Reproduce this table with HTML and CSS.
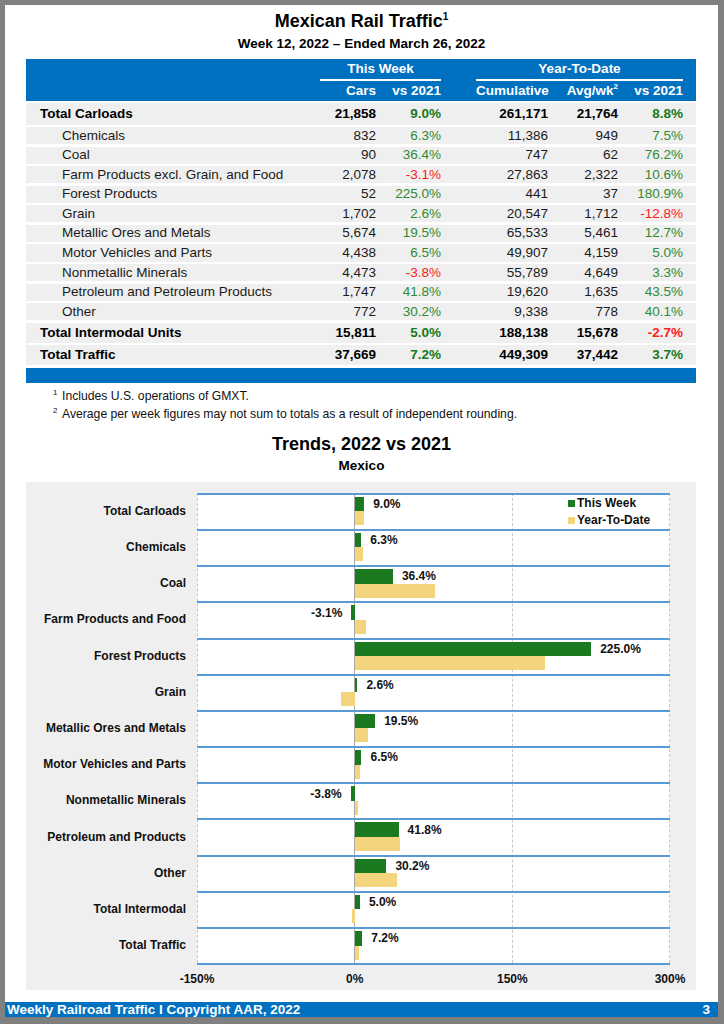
FILE: index.html
```html
<!DOCTYPE html>
<html lang="en">
<head>
<meta charset="utf-8">
<title>Mexican Rail Traffic</title>
<link rel="stylesheet" href="styles.css">
</head>
<body>
<div class="page">
  <div class="title">Mexican Rail Traffic<sup>1</sup></div>
  <div class="subtitle">Week 12, 2022 – Ended March 26, 2022</div>

  <div class="tbl">
    <div class="thead">
      <div class="cols hrow1">
        <div class="grp g1">This Week</div>
        <div class="grp g2">Year-To-Date</div>
      </div>
      <div class="cols hrow2">
        <span></span><span>Cars</span><span>vs 2021</span><span></span><span>Cumulative</span><span>Avg/wk<sup>2</sup></span><span>vs 2021</span><span></span>
      </div>
    </div>
    <div class="cols row total first"><span class="lbl">Total Carloads</span><span>21,858</span><span class="up">9.0%</span><span></span><span>261,171</span><span>21,764</span><span class="up">8.8%</span><span></span></div>
    <div class="cols row"><span class="lbl">Chemicals</span><span>832</span><span class="up">6.3%</span><span></span><span>11,386</span><span>949</span><span class="up">7.5%</span><span></span></div>
    <div class="cols row"><span class="lbl">Coal</span><span>90</span><span class="up">36.4%</span><span></span><span>747</span><span>62</span><span class="up">76.2%</span><span></span></div>
    <div class="cols row"><span class="lbl">Farm Products excl. Grain, and Food</span><span>2,078</span><span class="dn">-3.1%</span><span></span><span>27,863</span><span>2,322</span><span class="up">10.6%</span><span></span></div>
    <div class="cols row"><span class="lbl">Forest Products</span><span>52</span><span class="up">225.0%</span><span></span><span>441</span><span>37</span><span class="up">180.9%</span><span></span></div>
    <div class="cols row"><span class="lbl">Grain</span><span>1,702</span><span class="up">2.6%</span><span></span><span>20,547</span><span>1,712</span><span class="dn">-12.8%</span><span></span></div>
    <div class="cols row"><span class="lbl">Metallic Ores and Metals</span><span>5,674</span><span class="up">19.5%</span><span></span><span>65,533</span><span>5,461</span><span class="up">12.7%</span><span></span></div>
    <div class="cols row"><span class="lbl">Motor Vehicles and Parts</span><span>4,438</span><span class="up">6.5%</span><span></span><span>49,907</span><span>4,159</span><span class="up">5.0%</span><span></span></div>
    <div class="cols row"><span class="lbl">Nonmetallic Minerals</span><span>4,473</span><span class="dn">-3.8%</span><span></span><span>55,789</span><span>4,649</span><span class="up">3.3%</span><span></span></div>
    <div class="cols row"><span class="lbl">Petroleum and Petroleum Products</span><span>1,747</span><span class="up">41.8%</span><span></span><span>19,620</span><span>1,635</span><span class="up">43.5%</span><span></span></div>
    <div class="cols row"><span class="lbl">Other</span><span>772</span><span class="up">30.2%</span><span></span><span>9,338</span><span>778</span><span class="up">40.1%</span><span></span></div>
    <div class="cols row total"><span class="lbl">Total Intermodal Units</span><span>15,811</span><span class="up">5.0%</span><span></span><span>188,138</span><span>15,678</span><span class="dn">-2.7%</span><span></span></div>
    <div class="cols row total"><span class="lbl">Total Traffic</span><span>37,669</span><span class="up">7.2%</span><span></span><span>449,309</span><span>37,442</span><span class="up">3.7%</span><span></span></div>
    <div class="tfoot"></div>
  </div>

  <div class="notes">
    <div class="note"><sup>1</sup>Includes U.S. operations of GMXT.</div>
    <div class="note"><sup>2</sup>Average per week figures may not sum to totals as a result of independent rounding.</div>
  </div>

  <div class="ctitle">Trends, 2022 vs 2021</div>
  <div class="csub">Mexico</div>

  <div class="chart">
    <div class="cbody">
      <div class="cats">
        <div>Total Carloads</div>
        <div>Chemicals</div>
        <div>Coal</div>
        <div>Farm Products and Food</div>
        <div>Forest Products</div>
        <div>Grain</div>
        <div>Metallic Ores and Metals</div>
        <div>Motor Vehicles and Parts</div>
        <div>Nonmetallic Minerals</div>
        <div>Petroleum and Products</div>
        <div>Other</div>
        <div>Total Intermodal</div>
        <div>Total Traffic</div>
      </div>
      <div class="plot">
        <div class="vl vl-left"></div>
        <div class="vl vl-mid"></div>
        <div class="vl vl-right"></div>
        <div class="zero"></div>
        <div class="legend">
          <div class="litem"><i class="sw sw-wk"></i>This Week</div>
          <div class="litem"><i class="sw sw-ytd"></i>Year-To-Date</div>
        </div>
        <div class="prow"><div class="bar wk" style="left:157.67px;width:9.46px"></div><div class="bar ytd" style="left:157.67px;width:9.25px"></div><span class="val" style="left:176.13px">9.0%</span></div>
        <div class="prow"><div class="bar wk" style="left:157.67px;width:6.62px"></div><div class="bar ytd" style="left:157.67px;width:7.88px"></div><span class="val" style="left:173.29px">6.3%</span></div>
        <div class="prow"><div class="bar wk" style="left:157.67px;width:38.26px"></div><div class="bar ytd" style="left:157.67px;width:80.09px"></div><span class="val" style="left:204.93px">36.4%</span></div>
        <div class="prow"><div class="bar wk" style="left:154.41px;width:3.26px"></div><div class="bar ytd" style="left:157.67px;width:11.14px"></div><span class="val" style="right:327.59px">-3.1%</span></div>
        <div class="prow"><div class="bar wk" style="left:157.67px;width:236.5px"></div><div class="bar ytd" style="left:157.67px;width:190.15px"></div><span class="val" style="left:403.17px">225.0%</span></div>
        <div class="prow"><div class="bar wk" style="left:157.67px;width:2.73px"></div><div class="bar ytd" style="left:144.22px;width:13.45px"></div><span class="val" style="left:169.4px">2.6%</span></div>
        <div class="prow"><div class="bar wk" style="left:157.67px;width:20.5px"></div><div class="bar ytd" style="left:157.67px;width:13.35px"></div><span class="val" style="left:187.17px">19.5%</span></div>
        <div class="prow"><div class="bar wk" style="left:157.67px;width:6.83px"></div><div class="bar ytd" style="left:157.67px;width:5.26px"></div><span class="val" style="left:173.5px">6.5%</span></div>
        <div class="prow"><div class="bar wk" style="left:153.68px;width:3.99px"></div><div class="bar ytd" style="left:157.67px;width:3.47px"></div><span class="val" style="right:328.32px">-3.8%</span></div>
        <div class="prow"><div class="bar wk" style="left:157.67px;width:43.94px"></div><div class="bar ytd" style="left:157.67px;width:45.72px"></div><span class="val" style="left:210.61px">41.8%</span></div>
        <div class="prow"><div class="bar wk" style="left:157.67px;width:31.74px"></div><div class="bar ytd" style="left:157.67px;width:42.15px"></div><span class="val" style="left:198.41px">30.2%</span></div>
        <div class="prow"><div class="bar wk" style="left:157.67px;width:5.26px"></div><div class="bar ytd" style="left:154.83px;width:2.84px"></div><span class="val" style="left:171.93px">5.0%</span></div>
        <div class="prow"><div class="bar wk" style="left:157.67px;width:7.57px"></div><div class="bar ytd" style="left:157.67px;width:3.89px"></div><span class="val" style="left:174.24px">7.2%</span></div>
      </div>
    </div>
    <div class="axis">
      <span>-150%</span><span>0%</span><span>150%</span><span>300%</span>
    </div>
  </div>

  <div class="footer">
    <span>Weekly Railroad Traffic I Copyright AAR, 2022</span>
    <span>3</span>
  </div>
</div>
</body>
</html>
```

FILE: styles.css
```css
body {
  margin: 0;
  background: #808080;
  font-family: "Liberation Sans", Arial, Helvetica, sans-serif;
  color: #111;
}

.page {
  margin: 5px 0 0 5px;
  width: 713px;
  height: 1012px;
  box-sizing: border-box;
  padding-top: 5px;
  background: #fff;
  display: flex;
  flex-direction: column;
}

.title {
  text-align: center;
  font-size: 18px;
  line-height: 22px;
  font-weight: bold;
  color: #000;
}

.title sup {
  font-size: 10px;
  line-height: 0;
  vertical-align: 7px;
}

.subtitle {
  margin-top: 4px;
  text-align: center;
  font-size: 13.5px;
  line-height: 16px;
  font-weight: bold;
  color: #000;
}

/* ---------- table ---------- */
.tbl {
  margin: 7px 0 0 21px;
  width: 670px;
}

.cols {
  display: grid;
  grid-template-columns: 294px 56px 65px 35px 72px 70px 65px 13px;
}

.thead {
  background: #0070c0;
  color: #fff;
  font-weight: bold;
  font-size: 13.5px;
}

.hrow1 {
  height: 22px;
}

.grp {
  grid-row: 1;
  border-bottom: 2px solid #fff;
  text-align: center;
  line-height: 20px;
}

.g1 { grid-column: 2 / 4; }
.g2 { grid-column: 5 / 8; }

.hrow2 {
  height: 20px;
  line-height: 20px;
}

.hrow2 span {
  text-align: right;
}

.hrow2 sup {
  font-size: 8px;
  line-height: 0;
  vertical-align: 6px;
}

.row {
  margin-top: 2.4px;
  height: 17.2px;
  background: #efefef;
  align-items: center;
  font-size: 13.5px;
  line-height: 16px;
  color: #1a1a1a;
}

.row span {
  text-align: right;
}

.row .lbl {
  text-align: left;
  padding-left: 36px;
}

.row.total {
  height: 20px;
  font-weight: bold;
  color: #000;
}

.row.total .lbl {
  padding-left: 14px;
}

.row.first {
  margin-top: 2px;
  height: 21.6px;
}

.up { color: #2f8a30; }
.row.total .up { color: #17791a; }
.dn { color: #ff1a1a; }

.tfoot {
  margin-top: 2.6px;
  height: 15px;
  background: #0070c0;
}

/* ---------- notes ---------- */
.notes {
  margin: 4px 0 0 48px;
  font-size: 12.2px;
  line-height: 18px;
  color: #111;
}

.note sup {
  display: inline-block;
  width: 9px;
  font-size: 8px;
  line-height: 0;
  vertical-align: 5px;
}

/* ---------- chart ---------- */
.ctitle {
  margin-top: 10px;
  text-align: center;
  font-size: 18px;
  line-height: 22px;
  font-weight: bold;
  color: #000;
}

.csub {
  margin-top: 3px;
  text-align: center;
  font-size: 13.5px;
  line-height: 16px;
  font-weight: bold;
  color: #000;
}

.chart {
  margin: 8px 0 0 21px;
  width: 670px;
  background: #efefef;
  padding: 11px 0 4px;
}

.cbody {
  display: grid;
  grid-template-columns: 171px 473px;
}

.cats div {
  height: 36.2px;
  display: flex;
  align-items: center;
  justify-content: flex-end;
  padding-right: 11px;
  font-size: 12px;
  font-weight: bold;
  color: #111;
}

.plot {
  position: relative;
  background: #fff;
  border-bottom: 2px solid #5b9bd5;
}

.vl {
  position: absolute;
  top: 0;
  bottom: 0;
  border-left: 1px dashed #c8c8c8;
}

.vl-left { left: 0; }
.vl-mid { left: 315px; }
.vl-right { left: 472px; }

.zero {
  position: absolute;
  top: 0;
  bottom: 0;
  left: 156.6px;
  width: 1.6px;
  background: #a8a8a8;
}

.prow {
  position: relative;
  height: 36.2px;
  box-sizing: border-box;
  border-top: 2px solid #5b9bd5;
}

.bar {
  position: absolute;
}

.bar.wk {
  top: 2px;
  height: 14.5px;
  background: #1b7a1f;
}

.bar.ytd {
  top: 16.5px;
  height: 14px;
  background: #f4d47c;
}

.val {
  position: absolute;
  top: 2.3px;
  font-size: 12px;
  line-height: 14px;
  font-weight: bold;
  color: #111;
  white-space: nowrap;
}

.legend {
  position: absolute;
  left: 371px;
  top: 2px;
  z-index: 2;
  font-size: 12px;
  font-weight: bold;
  line-height: 17px;
  color: #111;
}

.litem {
  display: flex;
  align-items: center;
}

.sw {
  display: inline-block;
  width: 7px;
  height: 7px;
  margin-right: 2px;
}

.sw-wk { background: #1b7a1f; }
.sw-ytd { background: #f4d47c; }

.axis {
  display: flex;
  padding-left: 92.15px;
  margin-top: 6.4px;
}

.axis span {
  flex: 0 0 157.7px;
  text-align: center;
  font-size: 12px;
  line-height: 14px;
  font-weight: bold;
  color: #111;
}

/* ---------- footer ---------- */
.footer {
  margin-top: auto;
  height: 15px;
  background: #0070c0;
  color: #fff;
  font-weight: bold;
  font-size: 13.5px;
  line-height: 15px;
  display: flex;
  justify-content: space-between;
  padding: 0 8px 0 2px;
}
```
